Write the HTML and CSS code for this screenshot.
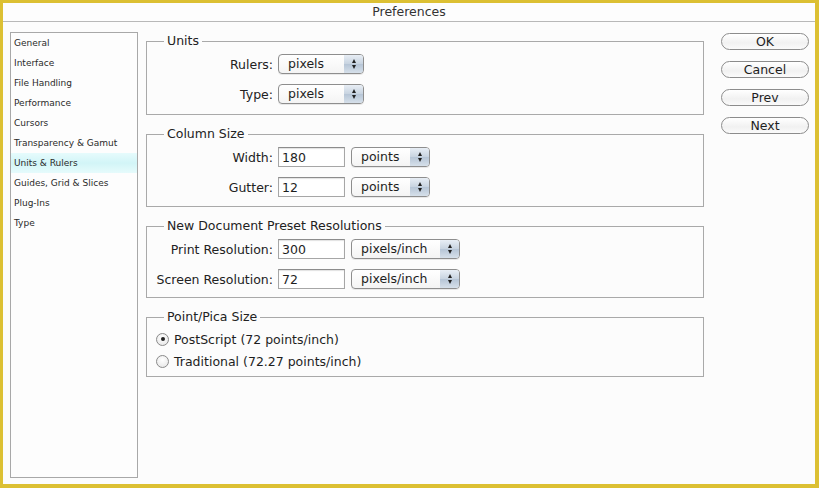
FILE: index.html
```html
<!DOCTYPE html>
<html>
<head>
<meta charset="utf-8">
<link rel="stylesheet" href="styles.css">
</head>
<body>
<div class="frame">
  <div class="titlebar">Preferences</div>
  <div class="content">
    <ul class="sidebar">
      <li>General</li>
      <li>Interface</li>
      <li>File Handling</li>
      <li>Performance</li>
      <li>Cursors</li>
      <li>Transparency &amp; Gamut</li>
      <li class="selected">Units &amp; Rulers</li>
      <li>Guides, Grid &amp; Slices</li>
      <li>Plug-Ins</li>
      <li>Type</li>
    </ul>
    <div class="main">
      <fieldset class="group units">
        <legend>Units</legend>
        <div class="row"><span class="lbl">Rulers:</span><span class="popup w-pixels">pixels<span class="step"><i class="up"></i><i class="down"></i></span></span></div>
        <div class="row"><span class="lbl">Type:</span><span class="popup w-pixels">pixels<span class="step"><i class="up"></i><i class="down"></i></span></span></div>
      </fieldset>
      <fieldset class="group">
        <legend>Column Size</legend>
        <div class="row"><span class="lbl">Width:</span><span class="field">180</span><span class="popup w-points">points<span class="step"><i class="up"></i><i class="down"></i></span></span></div>
        <div class="row"><span class="lbl">Gutter:</span><span class="field">12</span><span class="popup w-points">points<span class="step"><i class="up"></i><i class="down"></i></span></span></div>
      </fieldset>
      <fieldset class="group newdoc">
        <legend>New Document Preset Resolutions</legend>
        <div class="row"><span class="lbl">Print Resolution:</span><span class="field">300</span><span class="popup w-ppi">pixels/inch<span class="step"><i class="up"></i><i class="down"></i></span></span></div>
        <div class="row"><span class="lbl">Screen Resolution:</span><span class="field">72</span><span class="popup w-ppi">pixels/inch<span class="step"><i class="up"></i><i class="down"></i></span></span></div>
      </fieldset>
      <fieldset class="group radios">
        <legend>Point/Pica Size</legend>
        <div class="radio-row"><span class="radio checked"></span>PostScript (72 points/inch)</div>
        <div class="radio-row"><span class="radio"></span>Traditional (72.27 points/inch)</div>
      </fieldset>
    </div>
    <div class="buttons">
      <button class="btn">OK</button>
      <button class="btn">Cancel</button>
      <button class="btn">Prev</button>
      <button class="btn">Next</button>
    </div>
  </div>
</div>
</body>
</html>
```
FILE: styles.css
```css
html, body {
  margin: 0;
  padding: 0;
  background: #fbfbfb;
}
body {
  font-family: "DejaVu Sans", "Liberation Sans", sans-serif;
  color: #1e1e1e;
}
.frame {
  width: 819px;
  height: 488px;
  box-sizing: border-box;
  border-style: solid;
  border-color: #dcc033;
  border-width: 3px 4px 4px 3px;
  background: #fcfcfc;
  display: flex;
  flex-direction: column;
}
.titlebar {
  height: 18px;
  line-height: 17px;
  text-align: center;
  font-size: 12.5px;
  color: #333;
  border-bottom: 1px solid #b8b8b8;
  background: #fdfdfd;
}
.content {
  flex: 1;
  display: flex;
  padding: 10px 6px 6px 7px;
  min-height: 0;
}
.sidebar {
  list-style: none;
  margin: 0;
  padding: 0;
  width: 126px;
  border: 1px solid #a8a8a8;
  background: #fdfdfd;
  font-size: 9px;
  color: #2a2a2a;
}
.sidebar li {
  height: 20px;
  line-height: 20px;
  padding-left: 3px;
}
.sidebar li.selected {
  background: linear-gradient(to bottom, #e6fbfc, #d2f5f7 50%, #e6fbfc);
}
.main {
  width: 558px;
  margin-left: 8px;
  margin-top: 1px;
  display: flex;
  flex-direction: column;
  gap: 11px;
}
.group {
  margin: 0;
  border: 1px solid #a9a9a9;
  padding: 5px 0 9px 0;
  min-width: 0;
  display: flex;
  flex-direction: column;
  gap: 10px;
}
.group.units { padding-bottom: 10px; }
.group.newdoc { padding-bottom: 8px; }
.group legend {
  font-size: 12.5px;
  line-height: 16px;
  padding: 0 3px;
  margin-left: 17px;
  color: #222;
}
.row {
  display: flex;
  align-items: center;
  height: 20px;
  font-size: 12.5px;
}
.lbl {
  width: 126px;
  text-align: right;
  margin-right: 5px;
  color: #222;
}
.field {
  box-sizing: border-box;
  width: 67px;
  height: 20px;
  line-height: 19px;
  border: 1px solid #a6a6a6;
  border-top-color: #8c8c8c;
  box-shadow: inset 0 1px 1px rgba(0,0,0,0.12);
  background: #fff;
  padding-left: 3px;
  margin-right: 6px;
}
.popup {
  position: relative;
  box-sizing: border-box;
  height: 20px;
  line-height: 18px;
  border: 1px solid #8e8e8e;
  border-radius: 4px;
  background: linear-gradient(to bottom, #ffffff, #f4f4f4);
  padding-left: 9px;
  box-shadow: 0 1px 0 rgba(0,0,0,0.08);
}
.w-pixels { width: 86px; }
.w-points { width: 79px; }
.w-ppi { width: 109px; }
.step {
  position: absolute;
  right: 0;
  top: 0;
  bottom: 0;
  width: 19px;
  border-radius: 0 3px 3px 0;
  background: linear-gradient(to bottom, #e8eef5, #c7d3e0 50%, #b6c5d6 51%, #d6e0ea);
  display: flex;
  flex-direction: column;
  align-items: center;
  justify-content: center;
  gap: 2px;
}
.step i {
  display: block;
  width: 0;
  height: 0;
  border-left: 2.5px solid transparent;
  border-right: 2.5px solid transparent;
}
.step .up { border-bottom: 4px solid #222; }
.step .down { border-top: 4px solid #222; }
.radios {
  gap: 0;
  padding: 3px 0 4px 0;
}
.radio-row {
  display: flex;
  align-items: center;
  height: 22px;
  font-size: 12.5px;
  padding-left: 9px;
}
.radio {
  box-sizing: border-box;
  width: 13px;
  height: 13px;
  border-radius: 50%;
  border: 1px solid #8a8a8a;
  background: radial-gradient(circle at 50% 35%, #ffffff, #e4e4e4);
  margin-right: 5px;
  position: relative;
}
.radio.checked::after {
  content: "";
  position: absolute;
  left: 3.5px;
  top: 3.5px;
  width: 4px;
  height: 4px;
  border-radius: 50%;
  background: #222;
}
.buttons {
  margin-left: 17px;
  margin-top: 1px;
  display: flex;
  flex-direction: column;
  gap: 11px;
}
.btn {
  box-sizing: border-box;
  width: 88px;
  height: 17px;
  padding: 0;
  border: 1px solid #8c8c8c;
  border-radius: 9px;
  background: linear-gradient(to bottom, #ffffff, #f1f1f1 60%, #fafafa);
  font-family: "DejaVu Sans", "Liberation Sans", sans-serif;
  font-size: 12.5px;
  line-height: 15px;
  color: #1e1e1e;
}
```
